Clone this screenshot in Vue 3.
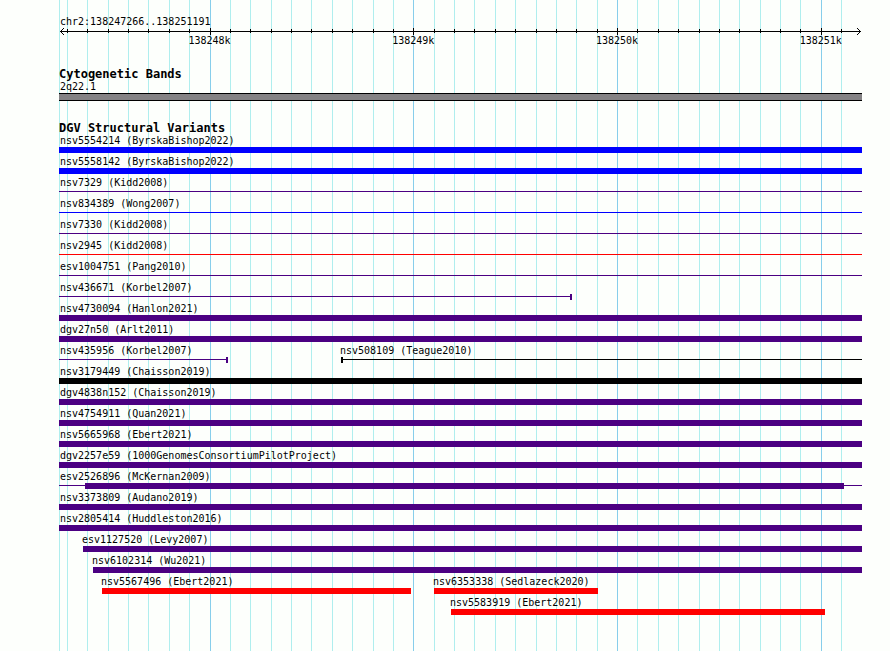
<script setup>
const region = { name: 'chr2', start: 138247266, end: 138251191 }

// The track is measured in 803 units; every offset is turned into a percentage.
const UNITS = 803
const pct = (n) => `${(n / UNITS) * 100}%`
const bpToUnits = (bp) => 1 + (bp - region.start) * 0.20375

const ticks = []
for (let bp = 138247300; bp <= region.end - 50; bp += 100) {
  const major = bp % 1000 === 0
  ticks.push({ bp, major, left: pct(bpToUnits(bp)), label: major ? `${bp / 1000}k` : '' })
}

const INDIGO = 'indigo'
const full = (name, color = INDIGO, kind = 'bar') => [{ name, color, kind, start: 0, end: UNITS }]

const rows = [
  full('nsv5554214 (ByrskaBishop2022)', 'blue'),
  full('nsv5558142 (ByrskaBishop2022)', 'blue'),
  full('nsv7329 (Kidd2008)', INDIGO, 'line'),
  full('nsv834389 (Wong2007)', 'blue', 'line'),
  full('nsv7330 (Kidd2008)', INDIGO, 'line'),
  full('nsv2945 (Kidd2008)', 'red', 'line'),
  full('esv1004751 (Pang2010)', INDIGO, 'line'),
  [{ name: 'nsv436671 (Korbel2007)', color: INDIGO, kind: 'line', start: 0, end: 513, cap: 'end' }],
  full('nsv4730094 (Hanlon2021)'),
  full('dgv27n50 (Arlt2011)'),
  [
    { name: 'nsv435956 (Korbel2007)', color: INDIGO, kind: 'line', start: 0, end: 169, cap: 'end' },
    { name: 'nsv508109 (Teague2010)', color: 'black', kind: 'line', start: 282, end: UNITS, cap: 'start' },
  ],
  full('nsv3179449 (Chaisson2019)', 'black'),
  full('dgv4838n152 (Chaisson2019)'),
  full('nsv4754911 (Quan2021)'),
  full('nsv5665968 (Ebert2021)'),
  full('dgv2257e59 (1000GenomesConsortiumPilotProject)'),
  [{ name: 'esv2526896 (McKernan2009)', color: INDIGO, kind: 'line', start: 0, end: UNITS, core: [26, 785] }],
  full('nsv3373809 (Audano2019)'),
  full('nsv2805414 (Huddleston2016)'),
  [{ name: 'esv1127520 (Levy2007)', color: INDIGO, kind: 'bar', start: 24, end: UNITS }],
  [{ name: 'nsv6102314 (Wu2021)', color: INDIGO, kind: 'bar', start: 34, end: UNITS }],
  [
    { name: 'nsv5567496 (Ebert2021)', color: 'red', kind: 'bar', start: 43, end: 352 },
    { name: 'nsv6353338 (Sedlazeck2020)', color: 'red', kind: 'bar', start: 375, end: 539 },
  ],
  [{ name: 'nsv5583919 (Ebert2021)', color: 'red', kind: 'bar', start: 392, end: 766 }],
]

const place = (row, i) => ({
  marginLeft: pct(row[i].start - (i ? row[i - 1].end : 0)),
  width: pct(row[i].end - row[i].start),
})
const corePlace = (f) => ({ marginLeft: pct(f.core[0]), width: pct(f.core[1] - f.core[0]) })
</script>

<template>
  <main class="browser">
    <div class="plot">
      <div class="grid" aria-hidden="true">
        <i class="rule"></i>
        <i v-for="t in ticks" :key="t.bp" class="rule" :class="{ major: t.major }" :style="{ left: t.left }"></i>
      </div>

      <header class="scale">
        <div class="label">{{ region.name }}:{{ region.start }}..{{ region.end }}</div>
        <div class="axis">
          <svg class="arrow" width="4" height="7" viewBox="0 0 4 7" aria-hidden="true">
            <path d="M3 0h1v1h-1zM2 1h1v1h-1zM1 2h1v1h-1zM0 3h1v1h-1zM1 4h1v1h-1zM2 5h1v1h-1zM3 6h1v1h-1z" />
          </svg>
          <svg class="arrow" width="4" height="7" viewBox="0 0 4 7" aria-hidden="true">
            <path d="M0 0h1v1h-1zM1 1h1v1h-1zM2 2h1v1h-1zM3 3h1v1h-1zM2 4h1v1h-1zM1 5h1v1h-1zM0 6h1v1h-1z" />
          </svg>
          <i v-for="t in ticks" :key="t.bp" class="tick" :class="{ major: t.major }" :style="{ left: t.left }"></i>
        </div>
        <div class="numbers">
          <template v-for="t in ticks" :key="t.bp">
            <span v-if="t.major" class="number" :style="{ left: t.left }">{{ t.label }}</span>
          </template>
        </div>
      </header>

      <section class="track">
        <h2>Cytogenetic Bands</h2>
        <div class="label">2q22.1</div>
        <div class="band"></div>
      </section>

      <section class="track">
        <h2>DGV Structural Variants</h2>
        <div v-for="(row, r) in rows" :key="r" class="row">
          <div
            v-for="(f, i) in row"
            :key="f.name"
            class="feature"
            :class="[f.color, { inset: f.start > 0 }]"
            :style="place(row, i)"
          >
            <div class="label">{{ f.name }}</div>
            <div class="glyph" :class="[f.kind, f.cap && `cap-${f.cap}`]">
              <div v-if="f.core" class="core" :style="corePlace(f)"></div>
            </div>
          </div>
        </div>
      </section>
    </div>
  </main>
</template>

<style>
body {
  background: #fdfffc;
}
</style>

<style scoped>
.browser {
  display: flex;
  min-height: 100vh;
  padding: 0 28px 0 59px;
  box-sizing: border-box;
  color: #000;
  font: 10px/12px "DejaVu Sans Mono", "Liberation Mono", monospace;
}
.plot {
  position: relative;
  flex: 1;
  min-width: 0;
  display: flex;
  flex-direction: column;
  gap: 20px;
  padding: 16px 0;
}
.grid {
  position: absolute;
  inset: 0;
}
.rule {
  position: absolute;
  top: 0;
  bottom: 0;
  left: 0;
  width: 1px;
  background: #afeeee;
}
.rule.major {
  background: #87ceeb;
}
.scale,
.track {
  position: relative;
}
.label {
  padding-left: 1px;
  white-space: nowrap;
}
.inset .label {
  padding-left: 0;
  margin-left: -1px;
}
h2 {
  margin: 0;
  font-size: 12px;
  line-height: 14px;
  font-weight: bold;
}
.axis {
  position: relative;
  display: flex;
  justify-content: space-between;
  height: 7px;
  margin: 0;
  padding: 0 1px;
  background: linear-gradient(#000, #000) center / calc(100% - 2px) 1px no-repeat;
}
.arrow {
  display: block;
  shape-rendering: crispEdges;
}
.tick {
  position: absolute;
  top: 1px;
  width: 1px;
  height: 4px;
  background: #000;
}
.tick.major {
  top: 0;
  height: 7px;
}
.numbers {
  position: relative;
  height: 12px;
}
.number {
  position: absolute;
  transform: translateX(-50%);
}
.band {
  height: 6px;
  border: solid #000;
  border-width: 1px 0;
  background: #848284;
}
.row {
  display: flex;
  height: 21px;
}
.feature {
  flex: none;
}
.feature .label {
  color: #000;
}
.indigo {
  color: #4b0082;
}
.blue {
  color: #00f;
}
.red {
  color: #f00;
}
.black {
  color: #000;
}
.glyph {
  height: 6px;
  box-sizing: border-box;
}
.bar,
.core {
  background: currentColor;
}
.core {
  height: 6px;
}
.line {
  background: linear-gradient(currentColor, currentColor) 0 2px / 100% 1px no-repeat;
}
.cap-start {
  border-left: 2px solid;
}
.cap-end {
  border-right: 2px solid;
}
</style>
